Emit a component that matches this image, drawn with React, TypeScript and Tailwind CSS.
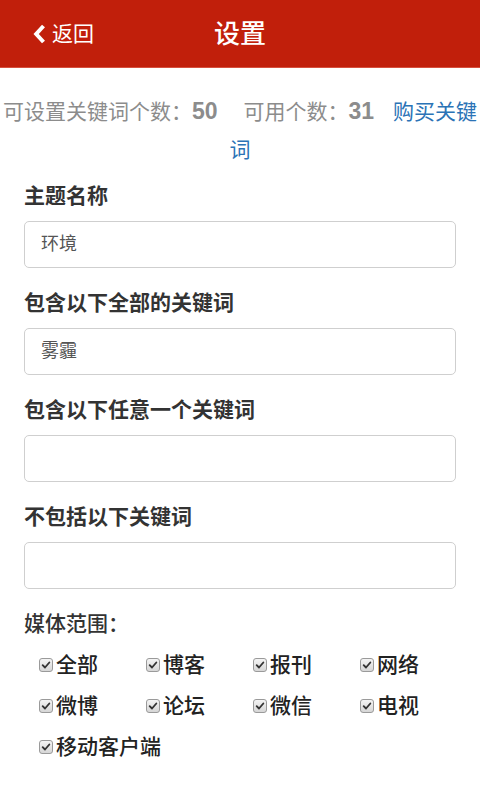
import { Fragment } from "react";

const font = { fontFamily: '"Liberation Sans", "Noto Sans CJK SC", sans-serif' };

const fields = [
  { label: "主题名称", value: "环境" },
  { label: "包含以下全部的关键词", value: "雾霾" },
  { label: "包含以下任意一个关键词", value: "" },
  { label: "不包括以下关键词", value: "" },
];

const media = ["全部", "博客", "报刊", "网络", "微博", "论坛", "微信", "电视", "移动客户端"];

function Check() {
  return (
    <span className="flex h-[14px] w-[14px] shrink-0 items-center justify-center rounded-[3px] border border-[#9a9a9a] bg-gradient-to-b from-[#f4f4f4] to-[#d6d6d6]">
      <svg viewBox="0 0 12 12" className="h-[10px] w-[10px]">
        <path d="M2 6.2 L4.8 9 L10 3" fill="none" stroke="#333" strokeWidth="2.2" strokeLinecap="round" strokeLinejoin="round" />
      </svg>
    </span>
  );
}

export default function App() {
  return (
    <div className="min-h-[800px] w-[480px] bg-white" style={font}>
      {/* header */}
      <div className="relative flex h-[68px] items-center justify-center border-b border-[#d6503e] bg-[#c11f0b]">
        <div className="absolute left-[33px] top-0 flex h-full items-center gap-[6px] text-white">
          <svg viewBox="0 0 13 20" className="h-[20px] w-[13px]">
            <path d="M10.5 2 L3.2 10 L10.5 18" fill="none" stroke="#fff" strokeWidth="4" strokeLinejoin="miter" />
          </svg>
          <span className="text-[21px] leading-none">返回</span>
        </div>
        <span className="text-[26px] font-medium leading-none text-white">设置</span>
      </div>

      {/* quota */}
      <p className="mt-[24px] text-center text-[21px] leading-[38px] text-[#8c8c8c]">
        可设置关键词个数：<b className="text-[23px] font-bold">50</b>
        <span className="ml-[26px]">可用个数：</span>
        <b className="text-[23px] font-bold">31</b>
        <span className="ml-[19px] text-[#2b73b6]">购买关键词</span>
      </p>

      {/* form */}
      <div className="px-[24px]">
        {fields.map((f, i) => (
          <Fragment key={f.label}>
            <div className={`${i === 0 ? "mt-[12px]" : "mt-[20px]"} text-[21px] font-bold leading-[30px] text-[#333]`}>
              {f.label}
            </div>
            <div className="mt-[10px] flex h-[47px] items-center rounded-[5px] border-[1.5px] border-[#cfcfcf] px-[16px] text-[18px] text-[#555]">
              {f.value}
            </div>
          </Fragment>
        ))}

        <div className="mt-[20px] text-[21px] font-medium leading-[30px] text-[#333]">媒体范围：</div>
        <div className="mt-[5px] grid w-[443px] grid-cols-[107px_107px_107px_107px] pl-[15px]">
          {media.map((m) => (
            <label key={m} className="flex h-[41px] items-center gap-[3px] whitespace-nowrap text-[21px] font-medium text-[#222]">
              <Check />
              <span>{m}</span>
            </label>
          ))}
        </div>
      </div>
    </div>
  );
}
